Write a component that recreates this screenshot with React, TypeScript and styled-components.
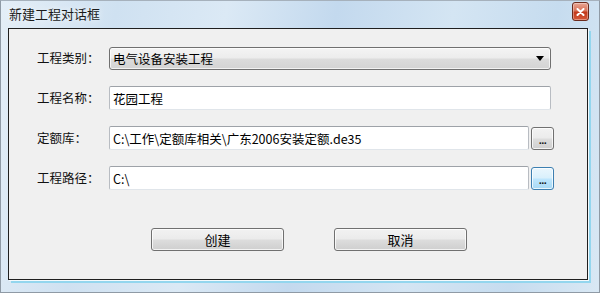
import styled, { createGlobalStyle } from "styled-components";

const GlobalStyle = createGlobalStyle`
  html, body {
    margin: 0;
    padding: 0;
    background: #ffffff;
  }
  body {
    font-family: "Noto Sans CJK SC", "Liberation Sans", sans-serif;
  }
  * {
    box-sizing: border-box;
  }
`;

const rows = [
  { label: "工程名称：", value: "花园工程" },
];

export default function App() {
  return (
    <>
      <GlobalStyle />
      <Window>
        <TitleBar>
          <Title>新建工程对话框</Title>
          <CloseButton aria-label="关闭">
            <svg width="9" height="8" viewBox="0 0 9 8">
              <path
                d="M1.5 1 L7.5 7 M7.5 1 L1.5 7"
                stroke="#ffffff"
                strokeWidth="2"
                strokeLinecap="round"
              />
            </svg>
          </CloseButton>
        </TitleBar>
        <Client>
          <Form>
            <Label>工程类别：</Label>
            <Select>
              <span>电气设备安装工程</span>
              <Arrow />
            </Select>

            {rows.map(({ label, value }) => (
              <Row key={label}>
                <Label>{label}</Label>
                <TextBox>{value}</TextBox>
              </Row>
            ))}

            <Label>定额库：</Label>
            <FieldWithButton>
              <TextBox>C:\工作\定额库相关\广东2006安装定额.de35</TextBox>
              <BrowseButton>...</BrowseButton>
            </FieldWithButton>

            <Label>工程路径：</Label>
            <FieldWithButton>
              <TextBox>C:\</TextBox>
              <BrowseButton $focused>...</BrowseButton>
            </FieldWithButton>
          </Form>
          <Actions>
            <PushButton>创建</PushButton>
            <PushButton>取消</PushButton>
          </Actions>
        </Client>
      </Window>
    </>
  );
}

const Window = styled.div`
  width: 600px;
  height: 293px;
  display: flex;
  flex-direction: column;
  padding: 0 11px 12px 7px;
  border: 1px solid #8f9aa5;
  border-top-color: #a6b1bc;
  background: linear-gradient(
    100deg,
    #e4eef7 0%,
    #cfe1f1 18%,
    #dbe9f5 35%,
    #c3d9ee 52%,
    #d4e5f3 70%,
    #c6dcef 86%,
    #d9e8f4 100%
  );
`;

const TitleBar = styled.div`
  height: 27px;
  display: flex;
  align-items: flex-start;
  justify-content: space-between;
  flex-shrink: 0;
`;

const Title = styled.span`
  margin: 3px 0 0 1px;
  font-size: 13px;
  line-height: 20px;
  color: #1b1b1b;
  text-shadow: 0 0 6px rgba(255, 255, 255, 0.9);
`;

const CloseButton = styled.div`
  width: 17px;
  height: 19px;
  margin: 1px -1px 0 0;
  display: flex;
  align-items: center;
  justify-content: center;
  border: 1px solid #6b2a1c;
  border-radius: 3px;
  background: linear-gradient(#e8a593 0%, #d8735a 45%, #c2391c 55%, #d5593a 100%);
  box-shadow: inset 0 0 0 1px rgba(255, 255, 255, 0.35);
`;

const Client = styled.div`
  flex: 1;
  display: flex;
  flex-direction: column;
  background: #f0f0f0;
  border: 1px solid #1f1f1f;
  padding: 17px 35px 0 28px;
  box-shadow: 1px 1px 0 0 #f4fafd, 3px 3px 0 0 #93d6ee;
`;

const Form = styled.div`
  display: grid;
  grid-template-columns: 72px 1fr;
  grid-auto-rows: 24px;
  row-gap: 16px;
  align-items: center;
`;

const Row = styled.div`
  display: contents;
`;

const Label = styled.span`
  font-size: 12.5px;
  color: #111111;
  line-height: 24px;
  white-space: nowrap;
`;

const Select = styled.div`
  height: 23px;
  display: flex;
  align-items: center;
  justify-content: space-between;
  padding: 0 6px 0 3px;
  margin-right: 1px;
  border: 1px solid #707070;
  border-radius: 3px;
  font-size: 12.5px;
  color: #000000;
  background: linear-gradient(#f4f4f4 0%, #ececec 48%, #dcdcdc 52%, #d3d3d3 100%);
  box-shadow: inset 0 0 0 1px rgba(255, 255, 255, 0.7);
`;

const Arrow = styled.span`
  width: 0;
  height: 0;
  border-left: 4px solid transparent;
  border-right: 4px solid transparent;
  border-top: 5px solid #000000;
  margin-top: 1px;
`;

const TextBox = styled.div`
  flex: 1;
  height: 24px;
  display: flex;
  align-items: center;
  padding: 0 3px;
  margin-right: 1px;
  background: #ffffff;
  border: 1px solid #b8bcc2;
  border-top-color: #9ea2a8;
  border-bottom-color: #e0e5ea;
  border-radius: 2px;
  font-size: 12.5px;
  color: #000000;
  white-space: nowrap;
  overflow: hidden;
`;

const FieldWithButton = styled.div`
  display: flex;
  align-items: center;
  gap: 2px;
  margin-right: -2px;
  ${TextBox} {
    margin-right: 0;
  }
`;

const BrowseButton = styled.div<{ $focused?: boolean }>`
  width: 23px;
  height: 23px;
  display: flex;
  align-items: center;
  justify-content: center;
  padding-top: 3px;
  border-radius: 3px;
  font-family: "Liberation Sans", sans-serif;
  font-size: 11px;
  font-weight: bold;
  letter-spacing: -0.5px;
  color: #1a1a1a;
  border: 1px solid ${(p) => (p.$focused ? "#3c7fb1" : "#707070")};
  background: ${(p) =>
    p.$focused
      ? "linear-gradient(#eaf6fd 0%, #d9f0fc 48%, #bee6fd 52%, #a7d9f5 100%)"
      : "linear-gradient(#f2f2f2 0%, #ebebeb 48%, #dddddd 52%, #cfcfcf 100%)"};
  box-shadow: inset 0 0 0 1px rgba(255, 255, 255, 0.75);
`;

const Actions = styled.div`
  display: flex;
  gap: 50px;
  margin: 38px 0 0 114px;
`;

const PushButton = styled.div`
  width: 133px;
  height: 23px;
  display: flex;
  align-items: center;
  justify-content: center;
  border: 1px solid #707070;
  border-radius: 3px;
  font-size: 13px;
  color: #000000;
  background: linear-gradient(#f2f2f2 0%, #ebebeb 48%, #dddddd 52%, #cfcfcf 100%);
  box-shadow: inset 0 0 0 1px rgba(255, 255, 255, 0.75);
`;
